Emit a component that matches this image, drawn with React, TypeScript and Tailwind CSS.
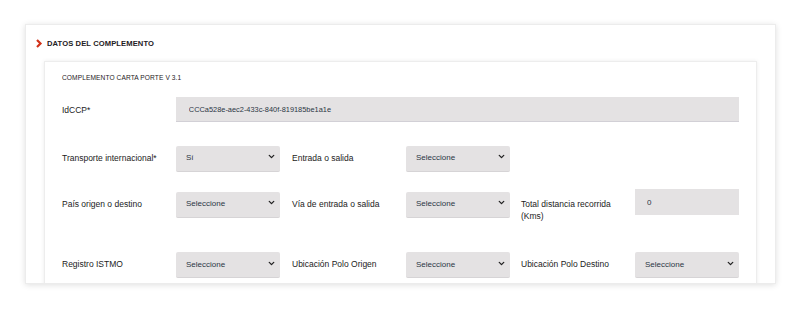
import { ChevronDown } from "lucide-react"

const font = { fontFamily: '"Liberation Sans", Arial, sans-serif' }

function Select({ value, className = "" }: { value: string; className?: string }) {
  return (
    <div className={`relative w-[104px] h-[26px] ${className}`}>
      <select
        defaultValue={value}
        className="appearance-none w-full h-full bg-[#e4e2e3] rounded-[2px] pl-[10px] pr-5 text-[8px] text-[#2b3644] outline-none border-b border-[#d6d4d6]"
      >
        <option>{value}</option>
      </select>
      <ChevronDown className="pointer-events-none absolute right-[4px] top-[9px] w-[9px] h-[9px] text-[#222]" strokeWidth={3.5} />
    </div>
  )
}

function Label({ children, className = "" }: { children: React.ReactNode; className?: string }) {
  return <div className={`w-[114px] text-[8.5px] leading-[12px] text-[#222] pt-[8.5px] ${className}`}>{children}</div>
}

export default function App() {
  return (
    <div className="w-[800px] h-[310px] bg-white pt-[24px] pl-[25px]" style={font}>
      <div className="w-[751px] h-[260px] bg-white border border-[#ececec] shadow-[0_1px_6px_rgba(0,0,0,0.13)] overflow-hidden">
        <div className="flex items-center h-[36px] pl-[9px] pt-[1px]">
          <svg width="8" height="9" viewBox="0 0 8 9" className="mr-[4px]">
            <path d="M2 1 L5.5 4.5 L2 8" fill="none" stroke="#d2321a" strokeWidth="2.2" />
          </svg>
          <span className="text-[7.6px] font-bold text-[#1e2024] tracking-[0.1px]">DATOS DEL COMPLEMENTO</span>
        </div>
        <div className="ml-[18px] w-[713px] h-[240px] bg-white border border-[#ededed] shadow-[0_0_4px_rgba(0,0,0,0.08)] pt-[10px] px-[17px]">
          <div className="text-[6.6px] leading-[12px] text-[#1e2024] font-medium tracking-[0.1px]">COMPLEMENTO CARTA PORTE V 3.1</div>
          <div className="flex mt-[13px]">
            <Label className="!pt-[6.5px]">IdCCP*</Label>
            <input
              readOnly
              value="CCCa528e-aec2-433c-840f-819185be1a1e"
              className="w-[564px] h-[25px] bg-[#e4e2e3] border-b border-[#d2d0d6] pl-[13px] text-[7.4px] text-[#2b3644] outline-none"
            />
          </div>
          <div className="flex mt-[21px]">
            <Label>Transporte internacional*</Label>
            <Select value="Sí" />
            <Label className="ml-[12px]">Entrada o salida</Label>
            <Select value="Seleccione" />
          </div>
          <div className="flex mt-[20px]">
            <Label>País origen o destino</Label>
            <Select value="Seleccione" />
            <Label className="ml-[12px]">Vía de entrada o salida</Label>
            <Select value="Seleccione" />
            <Label className="ml-[11px] pr-[8px]">Total distancia recorrida (Kms)</Label>
            <input
              readOnly
              value="0"
              className="w-[104px] h-[26px] bg-[#e4e2e3] pl-[12px] text-[8px] text-[#2b3644] outline-none"
            />
          </div>
          <div className="flex mt-[28px]">
            <Label>Registro ISTMO</Label>
            <Select value="Seleccione" />
            <Label className="ml-[12px]">Ubicación Polo Origen</Label>
            <Select value="Seleccione" />
            <Label className="ml-[11px]">Ubicación Polo Destino</Label>
            <Select value="Seleccione" />
          </div>
        </div>
      </div>
    </div>
  )
}
